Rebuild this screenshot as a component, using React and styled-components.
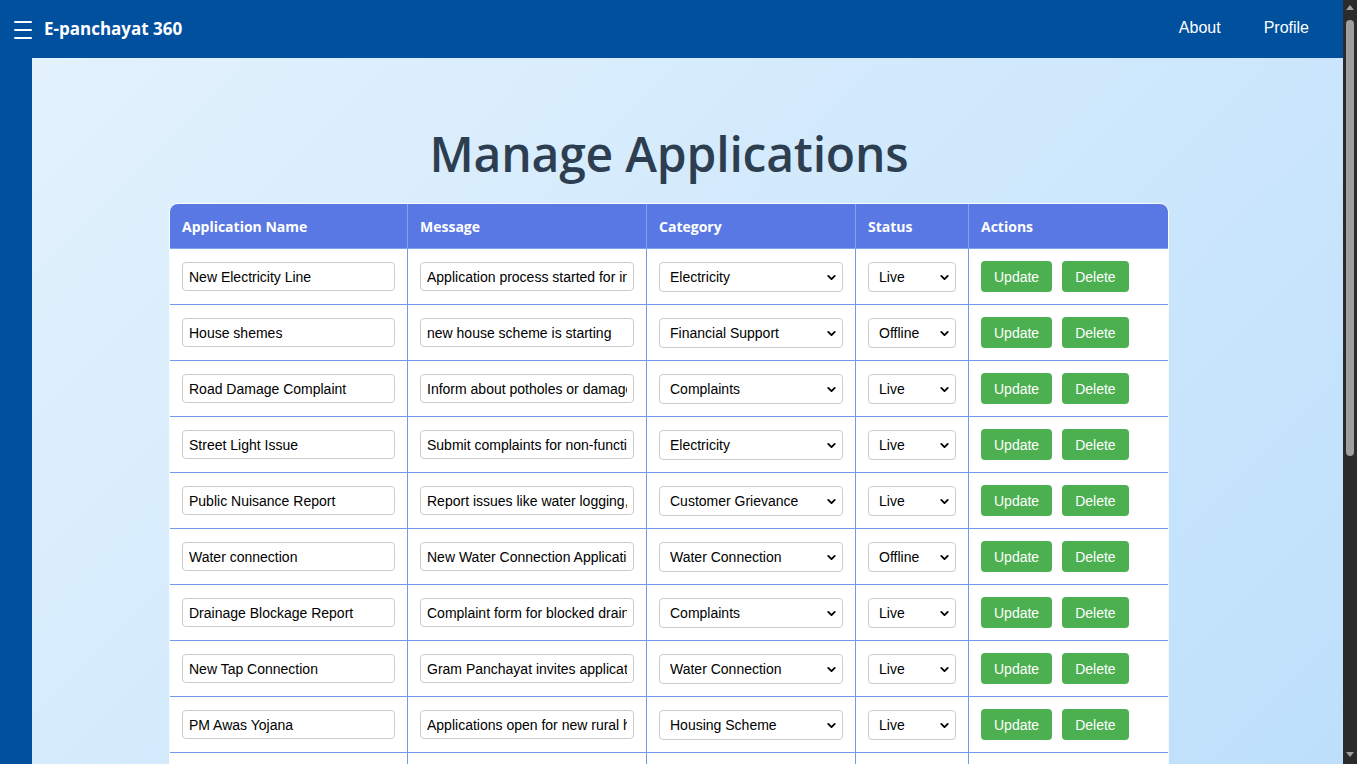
import { useState } from "react";
import styled, { createGlobalStyle } from "styled-components";
import { ChevronDown } from "lucide-react";

const GlobalStyle = createGlobalStyle`
    html, body {
        margin: 0;
        padding: 0;
    }
    html {
        padding-right: 14px;
        background: #2b2b2b;
    }
    body {
        background: #00509d;
        font-family: "Open Sans", "Noto Sans", sans-serif;
    }
`;

const categories = [
    "Electricity",
    "Financial Support",
    "Complaints",
    "Customer Grievance",
    "Water Connection",
    "Housing Scheme",
    "Certificates",
];

const initialApps = [
    { name: "New Electricity Line", message: "Application process started for installing new electricity line", category: "Electricity", status: "Live" },
    { name: "House shemes", message: "new house scheme is starting", category: "Financial Support", status: "Offline" },
    { name: "Road Damage Complaint", message: "Inform about potholes or damaged roads in your ward", category: "Complaints", status: "Live" },
    { name: "Street Light Issue", message: "Submit complaints for non-functional street lights", category: "Electricity", status: "Live" },
    { name: "Public Nuisance Report", message: "Report issues like water logging, garbage dumping", category: "Customer Grievance", status: "Live" },
    { name: "Water connection", message: "New Water Connection Application is open", category: "Water Connection", status: "Offline" },
    { name: "Drainage Blockage Report", message: "Complaint form for blocked drains", category: "Complaints", status: "Live" },
    { name: "New Tap Connection", message: "Gram Panchayat invites applications for new tap", category: "Water Connection", status: "Live" },
    { name: "PM Awas Yojana", message: "Applications open for new rural housing", category: "Housing Scheme", status: "Live" },
    { name: "Birth Certificate", message: "Apply for birth certificate online", category: "Certificates", status: "Live" },
    { name: "Pension Scheme", message: "Old age pension registration open", category: "Financial Support", status: "Offline" },
];

//Admin page where applications can be edited, updated or removed
const App = () => {
    const [apps, setApps] = useState(initialApps);

    const handleChange = (index, field, value) => {
        setApps(apps.map((item, i) => (i === index ? { ...item, [field]: value } : item)));
    };

    const handleDelete = (index) => {
        setApps(apps.filter((_, i) => i !== index));
    };

    return (
        <>
            <GlobalStyle />
            <Navbar>
                <Brand>
                    <MenuIcon aria-label="menu">
                        <span />
                        <span />
                        <span />
                    </MenuIcon>
                    <BrandName>E-panchayat 360</BrandName>
                </Brand>
                <NavLinks>
                    <NavLink href="#">About</NavLink>
                    <NavLink href="#">Profile</NavLink>
                </NavLinks>
            </Navbar>
            <Layout>
                <Sidebar />
                <Main>
                    <Title>Manage Applications</Title>
                    <Table>
                        <colgroup>
                            <col style={{ width: 238 }} />
                            <col style={{ width: 239 }} />
                            <col style={{ width: 209 }} />
                            <col style={{ width: 113 }} />
                            <col style={{ width: 199 }} />
                        </colgroup>
                        <thead>
                            <tr>
                                <Th>Application Name</Th>
                                <Th>Message</Th>
                                <Th>Category</Th>
                                <Th>Status</Th>
                                <Th $last>Actions</Th>
                            </tr>
                        </thead>
                        <tbody>
                            {apps.map((item, index) => (
                                <tr key={item.name}>
                                    <Td>
                                        <TextInput
                                            value={item.name}
                                            onChange={(e) => handleChange(index, "name", e.target.value)}
                                        />
                                    </Td>
                                    <Td>
                                        <TextInput
                                            value={item.message}
                                            onChange={(e) => handleChange(index, "message", e.target.value)}
                                        />
                                    </Td>
                                    <Td>
                                        <SelectWrap>
                                            <Select
                                                value={item.category}
                                                onChange={(e) => handleChange(index, "category", e.target.value)}
                                            >
                                                {categories.map((c) => (
                                                    <option key={c}>{c}</option>
                                                ))}
                                            </Select>
                                            <Arrow size={13} strokeWidth={3.4} />
                                        </SelectWrap>
                                    </Td>
                                    <Td>
                                        <SelectWrap>
                                            <Select
                                                value={item.status}
                                                onChange={(e) => handleChange(index, "status", e.target.value)}
                                            >
                                                <option>Live</option>
                                                <option>Offline</option>
                                            </Select>
                                            <Arrow size={13} strokeWidth={3.4} />
                                        </SelectWrap>
                                    </Td>
                                    <Td $last>
                                        <Actions>
                                            <ActionButton>Update</ActionButton>
                                            <ActionButton onClick={() => handleDelete(index)}>Delete</ActionButton>
                                        </Actions>
                                    </Td>
                                </tr>
                            ))}
                        </tbody>
                    </Table>
                </Main>
            </Layout>
            <ScrollTrack aria-hidden="true">
                <ScrollArrow />
                <ScrollThumb />
                <ScrollArrow $down />
            </ScrollTrack>
        </>
    );
};

export default App;

const Navbar = styled.header`
    height: 58px;
    background: #00509d;
    display: flex;
    align-items: center;
    justify-content: space-between;
    padding: 0 34px 0 14px;
`;

const Brand = styled.div`
    display: flex;
    align-items: center;
    gap: 12px;
`;

const MenuIcon = styled.div`
    width: 18px;
    display: flex;
    flex-direction: column;
    gap: 6px;
    margin-top: 1px;
    span {
        display: block;
        height: 2px;
        background: #ffffff;
        border-radius: 1px;
    }
`;

const BrandName = styled.span`
    color: #ffffff;
    font-size: 17px;
    font-weight: 700;
    margin-top: -1px;
`;

const NavLinks = styled.nav`
    display: flex;
    gap: 43px;
    margin-top: -3px;
`;

const NavLink = styled.a`
    color: #ffffff;
    text-decoration: none;
    font-family: "Liberation Sans", Arial, sans-serif;
    font-size: 16px;
`;

const Layout = styled.div`
    display: flex;
`;

const Sidebar = styled.aside`
    width: 32px;
    flex-shrink: 0;
    background: #00509d;
`;

const Main = styled.main`
    flex: 1;
    background: linear-gradient(135deg, #e3f2fd, #bbdefb);
    padding: 60px 37px 40px 0;
    display: flex;
    flex-direction: column;
    align-items: center;
`;

const Title = styled.h1`
    margin: 0 0 14px;
    font-size: 48px;
    font-weight: 600;
    color: #2c3e50;
    line-height: 72px;
    letter-spacing: -0.2px;
`;

const Table = styled.table`
    width: 998px;
    table-layout: fixed;
    border-collapse: separate;
    border-spacing: 0;
    background: #ffffff;
    border-radius: 8px 8px 0 0;
    overflow: hidden;
    box-shadow: 0 0 0 1px rgba(255, 255, 255, 0.8);
`;

const Th = styled.th`
    background: #5a78e4;
    color: #ffffff;
    text-align: left;
    font-size: 14px;
    font-weight: 700;
    padding: 1px 12px 0;
    height: 45px;
    box-sizing: border-box;
    border-bottom: 1px solid #7aa6ec;
    border-right: ${(p) => (p.$last ? "none" : "1px solid #7aa6ec")};
`;

const Td = styled.td`
    height: 56px;
    padding: 0 12px;
    border-bottom: 1px solid #6f9ce8;
    border-right: ${(p) => (p.$last ? "none" : "1px solid #6f9ce8")};
    box-sizing: border-box;
`;

const TextInput = styled.input`
    width: 100%;
    box-sizing: border-box;
    height: 29px;
    padding: 0 6px;
    border: 1px solid #cccccc;
    border-radius: 4px;
    font-family: "Liberation Sans", Arial, sans-serif;
    font-size: 14px;
    color: #000000;
    background: #ffffff;
    outline: none;
`;

const SelectWrap = styled.div`
    position: relative;
    width: 100%;
`;

const Select = styled.select`
    width: 100%;
    box-sizing: border-box;
    height: 30px;
    padding: 0 24px 0 10px;
    border: 1px solid #cccccc;
    border-radius: 4px;
    font-family: "Liberation Sans", Arial, sans-serif;
    font-size: 14px;
    color: #000000;
    background: #ffffff;
    appearance: none;
    outline: none;
`;

const Arrow = styled(ChevronDown)`
    position: absolute;
    right: 5px;
    top: 9px;
    color: #000000;
    pointer-events: none;
`;

const Actions = styled.div`
    display: flex;
    gap: 10px;
`;

const ActionButton = styled.button`
    height: 31px;
    padding: 0 13px;
    border: none;
    border-radius: 4px;
    background: #4caf50;
    color: #ffffff;
    font-family: "Liberation Sans", Arial, sans-serif;
    font-size: 14px;
    cursor: pointer;
`;

const ScrollTrack = styled.div`
    position: fixed;
    top: 0;
    right: 0;
    bottom: 0;
    width: 14px;
    background: #2b2b2b;
    display: flex;
    flex-direction: column;
    align-items: center;
    padding: 5px 0;
    box-sizing: border-box;
`;

const ScrollArrow = styled.div`
    width: 0;
    height: 0;
    border-left: 4px solid transparent;
    border-right: 4px solid transparent;
    border-bottom: ${(p) => (p.$down ? "none" : "5px solid #9f9f9f")};
    border-top: ${(p) => (p.$down ? "5px solid #9f9f9f" : "none")};
    margin-top: ${(p) => (p.$down ? "auto" : "0")};
    margin-bottom: ${(p) => (p.$down ? "2px" : "0")};
`;

const ScrollThumb = styled.div`
    width: 8px;
    height: 436px;
    margin-top: 10px;
    border-radius: 4px;
    background: #9f9f9f;
`;
